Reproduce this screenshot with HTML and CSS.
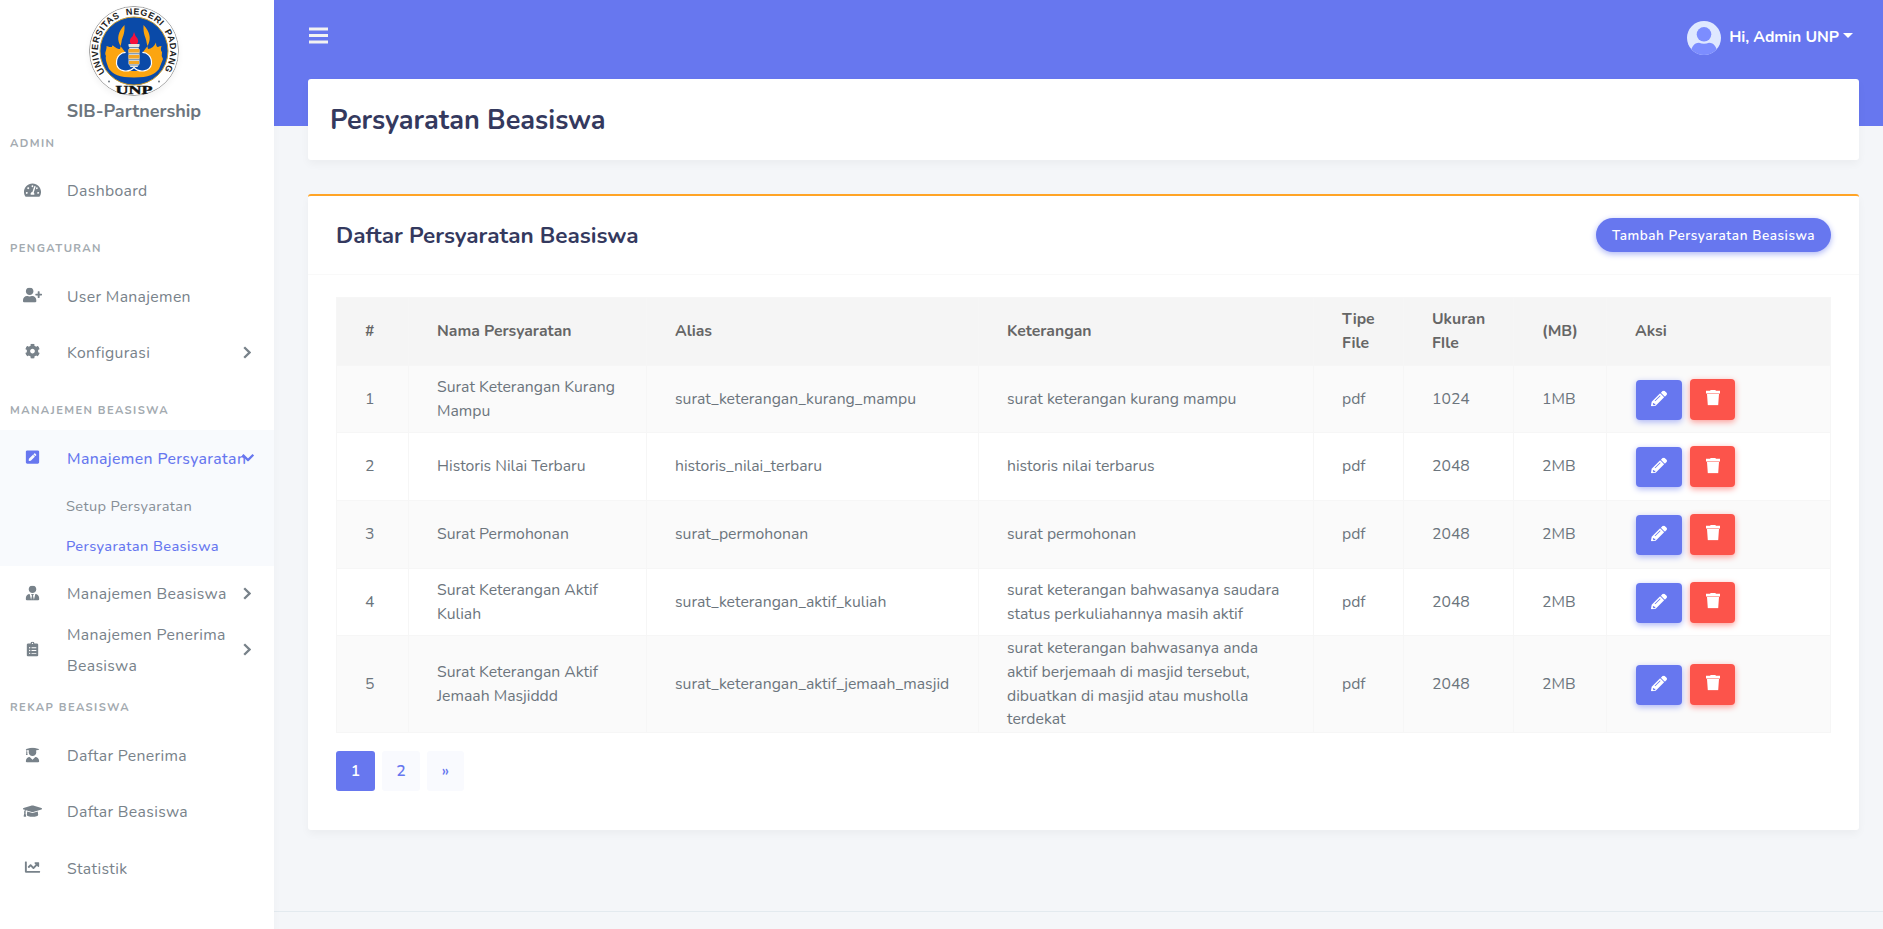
FILE: index.html
```html
<!DOCTYPE html>
<html lang="id">
<head>
<meta charset="utf-8">
<title>Persyaratan Beasiswa</title>
<link rel="stylesheet" href="styles.css">
</head>
<body>
<svg class="defs" aria-hidden="true">
  <symbol id="i-dash" viewBox="0 0 576 512"><path d="M288 32C128.94 32 0 160.94 0 320c0 52.8 14.25 102.26 39.06 144.8 5.61 9.62 16.3 15.2 27.44 15.2h443c11.14 0 21.83-5.58 27.44-15.2C561.75 422.26 576 372.8 576 320c0-159.06-128.94-288-288-288zm0 64c14.71 0 26.58 10.13 30.32 23.65-1.11 2.26-2.64 4.23-3.45 6.67l-9.22 27.67c-5.13 3.49-10.97 6.01-17.64 6.01-17.67 0-32-14.33-32-32S270.33 96 288 96zM96 384c-17.67 0-32-14.33-32-32s14.33-32 32-32 32 14.33 32 32-14.33 32-32 32zm48-160c-17.67 0-32-14.33-32-32s14.33-32 32-32 32 14.33 32 32-14.33 32-32 32zm246.77-72.41l-61.33 184C343.13 347.33 352 364.54 352 384c0 11.72-3.38 22.55-8.88 32H232.88c-5.5-9.45-8.88-20.28-8.88-32 0-33.94 26.5-61.43 59.9-63.59l61.34-184.01c4.17-12.56 17.73-19.45 30.36-15.17 12.57 4.19 19.35 17.79 15.17 30.36zm14.66 57.2l15.52-46.55c3.47-1.29 7.13-2.23 11.05-2.23 17.67 0 32 14.33 32 32s-14.33 32-32 32c-11.38-.01-20.89-6.28-26.57-15.22zM480 384c-17.67 0-32-14.33-32-32s14.33-32 32-32 32 14.33 32 32-14.33 32-32 32z"/></symbol>
  <symbol id="i-userplus" viewBox="0 0 640 512"><path d="M624 208h-64v-64c0-8.8-7.2-16-16-16h-32c-8.8 0-16 7.2-16 16v64h-64c-8.8 0-16 7.2-16 16v32c0 8.8 7.2 16 16 16h64v64c0 8.8 7.2 16 16 16h32c8.8 0 16-7.2 16-16v-64h64c8.8 0 16-7.2 16-16v-32c0-8.8-7.2-16-16-16zm-400 48c70.7 0 128-57.3 128-128S294.7 0 224 0 96 57.3 96 128s57.3 128 128 128zm89.6 32h-16.7c-22.2 10.2-46.9 16-72.9 16s-50.6-5.8-72.9-16h-16.7C60.2 288 0 348.2 0 422.4V464c0 26.5 21.5 48 48 48h352c26.5 0 48-21.5 48-48v-41.6c0-74.2-60.2-134.4-134.4-134.4z"/></symbol>
  <symbol id="i-cog" viewBox="0 0 512 512"><path d="M487.4 315.7l-42.6-24.6c4.3-23.2 4.3-47 0-70.2l42.6-24.6c4.9-2.8 7.1-8.6 5.5-14-11.1-35.6-30-67.8-54.7-94.6-3.8-4.1-10-5.1-14.8-2.3L380.8 110c-17.9-15.4-38.5-27.3-60.8-35.1V25.8c0-5.6-3.9-10.5-9.4-11.7-36.7-8.2-74.3-7.8-109.2 0-5.5 1.2-9.4 6.1-9.4 11.7V75c-22.2 7.9-42.8 19.8-60.8 35.1L88.7 85.5c-4.9-2.8-11-1.9-14.8 2.3-24.7 26.7-43.6 58.9-54.7 94.6-1.7 5.4.6 11.2 5.5 14L67.3 221c-4.3 23.2-4.3 47 0 70.2l-42.6 24.6c-4.9 2.8-7.1 8.6-5.5 14 11.1 35.6 30 67.8 54.7 94.6 3.8 4.1 10 5.1 14.8 2.3l42.6-24.6c17.9 15.4 38.5 27.3 60.8 35.1v49.2c0 5.6 3.9 10.5 9.4 11.7 36.7 8.2 74.3 7.8 109.2 0 5.5-1.2 9.4-6.1 9.4-11.7v-49.2c22.2-7.9 42.8-19.8 60.8-35.1l42.6 24.6c4.9 2.8 11 1.9 14.8-2.3 24.7-26.7 43.6-58.9 54.7-94.6 1.5-5.5-.7-11.3-5.6-14.1zM256 336c-44.1 0-80-35.9-80-80s35.9-80 80-80 80 35.9 80 80-35.9 80-80 80z"/></symbol>
  <symbol id="i-pensq" viewBox="0 0 448 512"><path d="M400 480H48c-26.5 0-48-21.5-48-48V80c0-26.5 21.5-48 48-48h352c26.5 0 48 21.5 48 48v352c0 26.5-21.5 48-48 48zM238.1 177.9L102.4 313.6l-6.3 57.1c-.8 7.6 5.6 14.1 13.3 13.3l57.1-6.3L302.2 242c2.3-2.3 2.3-6.1 0-8.5L246.7 178c-2.5-2.4-6.3-2.4-8.6-.1zM345 165.1L314.9 135c-9.4-9.4-24.6-9.4-33.9 0l-23.1 23.1c-2.3 2.3-2.3 6.1 0 8.5l55.5 55.5c2.3 2.3 6.1 2.3 8.5 0L345 199c9.3-9.3 9.3-24.5 0-33.9z"/></symbol>
  <symbol id="i-tie" viewBox="0 0 448 512"><path d="M224 256c70.7 0 128-57.3 128-128S294.7 0 224 0 96 57.3 96 128s57.3 128 128 128zm95.8 32.6L272 480l-32-136 32-56h-96l32 56-32 136-47.8-191.4C56.9 292 0 350.3 0 422.4V464c0 26.5 21.5 48 48 48h352c26.5 0 48-21.5 48-48v-41.6c0-72.1-56.9-130.4-128.2-133.8z"/></symbol>
  <symbol id="i-clip" viewBox="0 0 384 512"><path fill-rule="evenodd" d="M336 64h-80c0-35.3-28.7-64-64-64s-64 28.7-64 64H48C21.5 64 0 85.5 0 112v352c0 26.5 21.5 48 48 48h288c26.5 0 48-21.5 48-48V112c0-26.5-21.5-48-48-48zM96 424c-13.3 0-24-10.7-24-24s10.7-24 24-24 24 10.7 24 24-10.7 24-24 24zm0-96c-13.3 0-24-10.7-24-24s10.7-24 24-24 24 10.7 24 24-10.7 24-24 24zm0-96c-13.3 0-24-10.7-24-24s10.7-24 24-24 24 10.7 24 24-10.7 24-24 24zm96-192c13.3 0 24 10.7 24 24s-10.7 24-24 24-24-10.7-24-24 10.7-24 24-24zM160 384h160v32H160zm0-96h160v32H160zm0-96h160v32H160z"/></symbol>
  <symbol id="i-grad" viewBox="0 0 448 512"><path d="M319.4 320.6L224 416l-95.4-95.4C57.1 323.7 0 382.2 0 454.4v9.6c0 26.5 21.5 48 48 48h352c26.5 0 48-21.5 48-48v-9.6c0-72.2-57.1-130.7-128.6-133.8zM13.6 79.8l6.4 1.5v58.4c-7 4.2-12 11.5-12 20.3 0 8.4 4.6 15.4 11.1 19.7L3.5 242c-1.7 6.9 2.1 14 7.6 14h41.8c5.5 0 9.3-7.1 7.6-14l-15.6-62.3C51.4 175.4 56 168.4 56 160c0-8.8-5-16.1-12-20.3V87.1l66 15.9c-8.6 17.2-14 36.4-14 57 0 70.7 57.3 128 128 128s128-57.3 128-128c0-20.6-5.3-39.8-14-57l96.3-23.2c18.2-4.4 18.2-27.1 0-31.5l-190.4-46c-13-3.1-26.7-3.1-39.7 0L13.6 48.2c-18.1 4.4-18.1 27.2 0 31.6z"/></symbol>
  <symbol id="i-cap" viewBox="0 0 640 512"><path d="M622.34 153.2L343.4 67.5c-15.2-4.67-31.6-4.67-46.79 0L17.66 153.2c-23.54 7.23-23.54 38.36 0 45.59l48.63 14.94c-10.67 13.19-17.23 29.28-17.88 46.9C38.78 266.15 32 276.11 32 288c0 10.78 5.68 19.85 13.86 25.65L20.33 428.53C18.11 438.52 25.71 448 35.94 448h56.11c10.24 0 17.84-9.48 15.62-19.47L82.14 313.65C90.32 307.85 96 298.78 96 288c0-11.57-6.47-21.25-15.66-26.87.76-15.02 8.44-28.3 20.69-36.72L296.6 284.5c9.06 2.78 26.44 6.25 46.79 0l278.95-85.7c23.55-7.24 23.55-38.36 0-45.6zM352.79 315.09c-28.53 8.76-52.84 3.92-65.59 0l-145.02-44.55L128 384c0 35.35 85.96 64 192 64s192-28.65 192-64l-14.18-113.47-145.03 44.56z"/></symbol>
  <symbol id="i-chart" viewBox="0 0 512 512"><path d="M496 384H64V80c0-8.84-7.16-16-16-16H16C7.16 64 0 71.16 0 80v336c0 17.67 14.33 32 32 32h464c8.84 0 16-7.16 16-16v-32c0-8.84-7.16-16-16-16zM464 96H345.94c-21.38 0-32.09 25.85-16.97 40.97l32.4 32.4L288 242.75l-73.37-73.37c-12.5-12.5-32.76-12.5-45.25 0l-68.69 68.69c-6.25 6.25-6.25 16.38 0 22.63l22.62 22.62c6.25 6.25 16.38 6.25 22.63 0L192 237.25l73.37 73.37c12.5 12.5 32.76 12.5 45.25 0l96-96 32.4 32.4c15.12 15.12 40.97 4.41 40.97-16.97V112c.01-8.84-7.15-16-15.99-16z"/></symbol>
  <symbol id="i-chev" viewBox="0 0 8 13"><path d="M1.2 1.2 6.5 6.5 1.2 11.8" fill="none" stroke="currentColor" stroke-width="2.3"/></symbol>
  <symbol id="i-pencil" viewBox="0 0 512 512"><path d="M497.9 142.1l-46.1 46.1c-4.7 4.7-12.3 4.7-17 0l-111-111c-4.7-4.7-4.7-12.3 0-17l46.1-46.1c18.7-18.7 49.1-18.7 67.9 0l60.1 60.1c18.8 18.7 18.8 49.1 0 67.9zM284.2 99.8L21.6 362.4.4 483.9c-2.9 16.4 11.4 30.6 27.8 27.8l121.5-21.3 262.6-262.6c4.7-4.7 4.7-12.3 0-17l-111-111c-4.8-4.7-12.4-4.7-17.1 0zM124.1 339.9c-5.5-5.5-5.5-14.3 0-19.8l154-154c5.5-5.5 14.3-5.5 19.8 0s5.500 14.3 0 19.8l-154 154c-5.500 5.500-14.3 5.500-19.8 0zM88 424h48v36.3l-50 8-27-27L64 400h24z"/></symbol>
  <symbol id="i-trash" viewBox="0 0 14 16"><path d="M4.600.5h4.800l.5.7H14v2.800H0V1.200h4.100zM1 4.600h12l-.8 11.200H1.800z"/></symbol>
</svg>

<div class="layout">
  <aside class="sidebar">
    <div class="brand">
      <svg class="logo" viewBox="0 0 90 90">
        <circle cx="45" cy="45" r="44.600" fill="#fff" stroke="#777" stroke-width=".7"/>
        <circle cx="45" cy="45" r="34" fill="#0a4aa8" stroke="#c99a2e" stroke-width="1"/>
        <path id="arc" d="M16.600 67.200A36.200 36.200 0 1 1 73.400 67.200" fill="none"/>
        <text class="ring"><textPath href="#arc" startOffset="1" textLength="157">UNIVERSITAS&#160; NEGERI&#160; PADANG</textPath></text>
        <circle cx="20" cy="75.500" r="1"/><circle cx="70" cy="75.500" r="1"/>
        <path d="M35.500 19C29 26 28 32 30.500 38Q32 41 33 42L36 46 28 57 34 65H56L62 57 54 46 57 42Q58 41 59.500 38C62 32 61 26 54.500 19 54 29 57 31 57.500 36L59 43Q64 43 67 36.500 67 41 69 41 70.500 40 72.500 40 71 44 73 46 72 50 74 53 72 58 70 63C66 68 60 71.500 45 71.500S24 68 20 63C18 58 16 53 17 50 15 47 18 44 17.500 40 20 41 21 41 23 41 23 36.500 26 43 31 43L32.500 36C33 31 36 29 35.500 19z" fill="#fca510"/>
        <path d="M45 61.500C40 67 29 66 27.500 58 27 50 32 46 38 46.500H52C58 46 63 50 62.500 58 61 66 50 67 45 61.500z" fill="#0a4aa8" stroke="#fff" stroke-width="1.200"/>
        <path d="M35.500 38H54.500L53 49H37z" fill="#0a4aa8"/>
        <path d="M39.500 38H50.500V40L49.500 42 50.500 44V58L48.500 61H41.500L39.500 58V44L40.500 42 39.500 40z" fill="#e8e6dc"/>
        <path d="M39.500 43h11v3.500h-11zM39.500 49h11v3.500h-11zM40 55h10v3h-10z" fill="#f5a623"/>
        <path d="M39.500 41.500h11M39.500 47.700h11M39.500 53.700h11M40 59h10" stroke="#164d91" stroke-width=".6"/>
        <path d="M45 26Q46 30 48.500 32.500 50 36 48 38H42Q40 36 41.500 32.500 44.500 30 45 26z" fill="#f5103c"/>
        <text class="unp" x="45" y="87.500" text-anchor="middle" textLength="37" lengthAdjust="spacingAndGlyphs">UNP</text>
      </svg>
      <div class="brand-name">SIB-Partnership</div>
    </div>
    <nav>
      <div class="head">ADMIN</div>
      <a class="item"><svg class="ico"><use href="#i-dash"/></svg><span>Dashboard</span></a>
      <div class="head">PENGATURAN</div>
      <a class="item"><svg class="ico"><use href="#i-userplus"/></svg><span>User Manajemen</span></a>
      <a class="item"><svg class="ico"><use href="#i-cog"/></svg><span>Konfigurasi</span><svg class="chev"><use href="#i-chev"/></svg></a>
      <div class="head">MANAJEMEN BEASISWA</div>
      <div class="group">
        <a class="item on"><svg class="ico"><use href="#i-pensq"/></svg><span>Manajemen Persyaratan</span><svg class="chev down"><use href="#i-chev"/></svg></a>
        <a class="sub">Setup Persyaratan</a>
        <a class="sub on">Persyaratan Beasiswa</a>
      </div>
      <a class="item"><svg class="ico"><use href="#i-tie"/></svg><span>Manajemen Beasiswa</span><svg class="chev"><use href="#i-chev"/></svg></a>
      <a class="item"><svg class="ico"><use href="#i-clip"/></svg><span>Manajemen Penerima<br>Beasiswa</span><svg class="chev"><use href="#i-chev"/></svg></a>
      <div class="head">REKAP BEASISWA</div>
      <a class="item"><svg class="ico"><use href="#i-grad"/></svg><span>Daftar Penerima</span></a>
      <a class="item"><svg class="ico"><use href="#i-cap"/></svg><span>Daftar Beasiswa</span></a>
      <a class="item"><svg class="ico"><use href="#i-chart"/></svg><span>Statistik</span></a>
    </nav>
  </aside>

  <main class="main">
    <header class="topbar">
      <svg class="bars" viewBox="0 0 19 17"><path d="M0 .500h19v3H0zM0 7h19v3H0zM0 13.500h19v3H0z"/></svg>
      <div class="user">
        <svg class="avatar" viewBox="0 0 34 34"><defs><clipPath id="av"><circle cx="17" cy="17" r="17"/></clipPath></defs><g clip-path="url(#av)"><path d="M0 0h34v34H0z" fill="#dfe8ff"/><circle cx="17" cy="13.300" r="7.300" fill="#7c8dff"/><path d="M3 34C4 26 7 22 12 21.800Q17 23.600 22 21.800C27 22 30 26 31 34z" fill="#7c8dff"/></g></svg>
        <span>Hi, Admin UNP</span><i class="caret"></i>
      </div>
    </header>
    <section class="title-card"><h1>Persyaratan Beasiswa</h1></section>
    <section class="card">
      <div class="card-head"><h4>Daftar Persyaratan Beasiswa</h4><a class="add">Tambah Persyaratan Beasiswa</a></div>
      <div class="card-body">
        <table>
          <colgroup><col class="c1"><col class="c2"><col class="c3"><col class="c4"><col class="c5"><col class="c6"><col class="c7"><col class="c8"></colgroup>
          <thead><tr><th>#</th><th>Nama Persyaratan</th><th>Alias</th><th>Keterangan</th><th>Tipe<br>File</th><th>Ukuran<br>FIle</th><th>(MB)</th><th>Aksi</th></tr></thead>
          <tbody>
            <tr><td>1</td><td>Surat Keterangan Kurang<br>Mampu</td><td>surat_keterangan_kurang_mampu</td><td>surat keterangan kurang mampu</td><td>pdf</td><td>1024</td><td>1MB</td><td><div class="acts"><a class="btn edit"><svg><use href="#i-pencil"/></svg></a><a class="btn del"><svg><use href="#i-trash"/></svg></a></div></td></tr>
            <tr><td>2</td><td>Historis Nilai Terbaru</td><td>historis_nilai_terbaru</td><td>historis nilai terbarus</td><td>pdf</td><td>2048</td><td>2MB</td><td><div class="acts"><a class="btn edit"><svg><use href="#i-pencil"/></svg></a><a class="btn del"><svg><use href="#i-trash"/></svg></a></div></td></tr>
            <tr><td>3</td><td>Surat Permohonan</td><td>surat_permohonan</td><td>surat permohonan</td><td>pdf</td><td>2048</td><td>2MB</td><td><div class="acts"><a class="btn edit"><svg><use href="#i-pencil"/></svg></a><a class="btn del"><svg><use href="#i-trash"/></svg></a></div></td></tr>
            <tr><td>4</td><td>Surat Keterangan Aktif<br>Kuliah</td><td>surat_keterangan_aktif_kuliah</td><td>surat keterangan bahwasanya saudara<br>status perkuliahannya masih aktif</td><td>pdf</td><td>2048</td><td>2MB</td><td><div class="acts"><a class="btn edit"><svg><use href="#i-pencil"/></svg></a><a class="btn del"><svg><use href="#i-trash"/></svg></a></div></td></tr>
            <tr class="tall"><td>5</td><td>Surat Keterangan Aktif<br>Jemaah Masjiddd</td><td>surat_keterangan_aktif_jemaah_masjid</td><td>surat keterangan bahwasanya anda<br>aktif berjemaah di masjid tersebut,<br>dibuatkan di masjid atau musholla<br>terdekat</td><td>pdf</td><td>2048</td><td>2MB</td><td><div class="acts"><a class="btn edit"><svg><use href="#i-pencil"/></svg></a><a class="btn del"><svg><use href="#i-trash"/></svg></a></div></td></tr>
          </tbody>
        </table>
        <div class="pages"><a class="pg cur">1</a><a class="pg">2</a><a class="pg last">»</a></div>
      </div>
    </section>
    <footer class="footer"></footer>
  </main>
</div>
</body>
</html>
```
FILE: styles.css
```css
* { box-sizing: border-box; }
html, body { margin: 0; height: 929px; overflow: hidden; }
body { background: #f4f6f9; color: #6c757d; font-family: Nunito, Lato, "Open Sans", sans-serif; font-size: 15.75px; }
.defs { display: none; }
svg { fill: currentColor; }
.layout { display: flex; height: 929px; }

/* Sidebar */
.sidebar { width: 274px; flex: none; background: #fff; box-shadow: 0 4px 8px rgba(0,0,0,.03); z-index: 1; }
.brand { height: 114px; padding: 6px 6px 0 0; display: flex; flex-direction: column; align-items: center; }
.logo { width: 90px; height: 90px; flex: none; border-radius: 50%; box-shadow: 0 3px 6px rgba(0,0,0,.05); }
.ring { font: 700 9px "Liberation Sans", Arial, sans-serif; fill: #222; }
.unp { font: 700 12px "Liberation Serif", serif; fill: #111; stroke: #111; stroke-width: .4; }
.brand-name { font-size: 18px; font-weight: 700; line-height: 30px; }
.head { height: 49.200px; padding: 19.500px 0 0 10px; font-size: 11.250px; line-height: 20px; font-weight: 700; letter-spacing: 1.400px; color: #a3aab0; }
.item { height: 56.250px; display: flex; align-items: center; color: #78828a; line-height: 31px; letter-spacing: .34px; }
.ico { width: 19px; height: 15.200px; margin: 0 25px 0 23px; flex: none; transform: translateY(-1.500px); color: #78828a; }
.item span { flex: 1; min-width: 0; white-space: nowrap; padding-top: 1px; }
.chev { width: 8px; height: 13px; flex: none; margin-right: 23px; transform: translateY(-1px); }
.chev.down { transform: translate(1px, -1px) rotate(90deg); }
.group { background: #f8fafd; height: 136px; }
.group .item { height: 57px; }
.item.on, .item.on .ico, .sub.on { color: #6777ef; }
.item.on, .sub.on { font-weight: 500; letter-spacing: .38px; }
.sub { display: block; height: 39.500px; line-height: 39px; padding-left: 66px; font-size: 14.625px; letter-spacing: .34px; color: #868e96; }

/* Main column */
.main { flex: 1; display: flex; flex-direction: column; padding: 0 25px 0 34px; background: linear-gradient(#6777ef 126px, #f4f6f9 126px); }
.topbar { height: 79px; flex: none; display: flex; justify-content: space-between; padding: 27px 6px 0 1px; }
.bars { width: 19px; height: 17px; color: #f2f2f2; }
.user { display: flex; align-items: center; height: 34px; margin-top: -6px; color: #fff; font-weight: 700; letter-spacing: -.05px; }
.avatar { width: 34px; height: 34px; margin-right: 8px; }
.user span { line-height: 30px; margin-top: -2px; }
.caret { border: 5px solid transparent; border-top-color: #fff; border-bottom: 0; margin: -5px 0 0 4px; }
.title-card { height: 81px; flex: none; display: flex; align-items: center; background: #fff; border-radius: 3px; padding: 1px 0 0 22px; box-shadow: 0 4px 9px rgba(0,0,0,.04); }
h1, h4 { margin: 0; color: #34395e; font-weight: 700; }
h1 { font-size: 27px; }
.card { margin-top: 34px; height: 636px; flex: none; background: #fff; border-top: 2px solid #ffa426; border-radius: 3px; box-shadow: 0 4px 9px rgba(0,0,0,.04); }
.card-head { height: 79px; display: flex; align-items: center; justify-content: space-between; padding: 0 28px; border-bottom: 1px solid #f9f9f9; }
h4 { font-size: 22.500px; }
.add { width: 235px; height: 34px; line-height: 35px; border-radius: 17px; background: #6777ef; color: #fff; font-size: 13.500px; font-weight: 600; letter-spacing: .56px; text-align: center; box-shadow: 0 2px 6px #acb5f6; }
.card-body { padding: 22px 28px; }

table { width: 1494px; table-layout: fixed; border-collapse: collapse; }
.c1 { width: 72px; } .c2 { width: 238px; } .c3 { width: 332px; } .c4 { width: 335px; }
.c5 { width: 90px; } .c6 { width: 110px; } .c7 { width: 93px; } .c8 { width: 224px; }
th, td { height: 67.700px; padding: 1px 28px 0; text-align: left; vertical-align: middle; line-height: 23.625px; white-space: nowrap; border: 1px solid #f6f6f6; }
th { background: #f5f5f5; color: #666; font-weight: 700; }
tbody tr:nth-child(odd) { background: #fafafa; }
.tall td { height: 95.300px; }
.acts { display: flex; align-items: flex-end; gap: 8px; padding-left: 1px; margin-top: -1px; }
.btn { display: flex; align-items: center; justify-content: center; width: 46px; height: 40px; border-radius: 4px; color: #fff; background: #6777ef; box-shadow: 0 2px 6px #acb5f6; }
.btn svg { width: 16px; height: 16px; transform: translateY(-1.500px); }
.btn.del { width: 45px; height: 41px; background: #fc544b; box-shadow: 0 2px 6px #fd9b96; }
.btn.del svg { width: 14px; }

.pages { display: flex; gap: 7px; margin-top: 18px; }
.pg { width: 38px; height: 40px; line-height: 40px; text-align: center; border-radius: 3px; background: #f9fafe; color: #6777ef; font-weight: 600; }
.pg.cur { width: 39px; background: #6777ef; color: #fff; }
.pg.last { width: 37px; }
.footer { margin: 81px -25px 0 -34px; border-top: 1px solid #e3eaef; }
```
